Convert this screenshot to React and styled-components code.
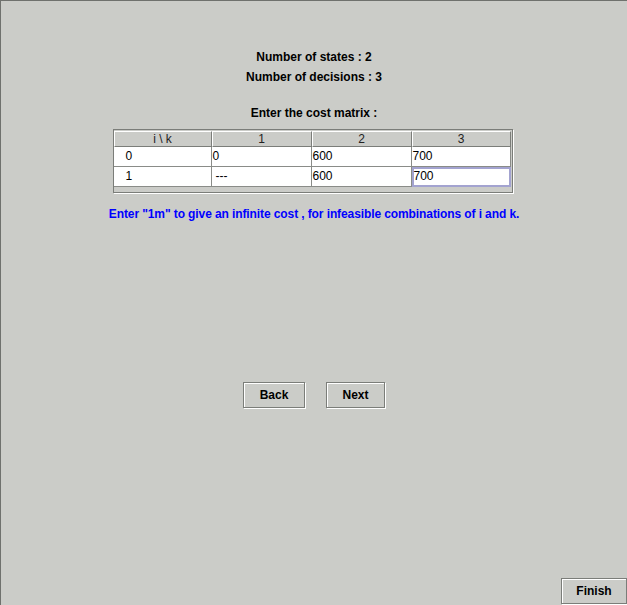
import React from "react";
import styled, { createGlobalStyle } from "styled-components";

const Global = createGlobalStyle`
  html, body {
    margin: 0;
    padding: 0;
    background: #cbccc8;
  }
  body {
    font-family: "Liberation Sans", Arial, sans-serif;
  }
`;

const Frame = styled.div`
  width: 627px;
  height: 605px;
  box-sizing: border-box;
  border-left: 1px solid #6f716d;
  border-top: 1px solid #6f716d;
  background: #cbccc8;
  display: flex;
  flex-direction: column;
  align-items: center;
  padding-top: 49px;
  position: relative;
`;

const Label = styled.div`
  font-size: 12px;
  font-weight: bold;
  color: ${(p) => (p.$blue ? "#0000ff" : "#000")};
  line-height: 14px;
  margin-top: ${(p) => p.$gap || 0}px;
  text-align: center;
  letter-spacing: ${(p) => (p.$blue ? "-0.1px" : "0")};
`;

const TableBox = styled.div`
  margin-top: 9px;
  width: 400px;
  box-sizing: border-box;
  border: 1px solid #7b7d79;
  box-shadow: 1px 1px 0 #ffffff;
  padding: 1px 1px 5px 0;
  margin-left: -3px;
`;

const Grid = styled.div`
  display: grid;
  grid-template-columns: 98px 100px 100px 99px;
`;

const Head = styled.div`
  height: 16px;
  box-sizing: border-box;
  background: #cbccc8;
  border-left: 1px solid #ffffff;
  border-top: 1px solid #ffffff;
  border-right: 1px solid #7b7d79;
  border-bottom: 1px solid #7b7d79;
  font-size: 12px;
  line-height: 14px;
  text-align: center;
  color: #222;
`;

const Cell = styled.div`
  height: 20px;
  box-sizing: border-box;
  background: #ffffff;
  border-right: 1px solid #8a8c88;
  border-bottom: 1px solid #8a8c88;
  font-size: 12px;
  line-height: 19px;
  padding-left: ${(p) => p.$pad ?? 1}px;
  color: #000;
  ${(p) =>
    p.$focus &&
    `
    border: 1px solid #a3a3d0;
    box-shadow: inset 0 0 0 1px #a3a3d0;
    line-height: 17px;
    padding-left: 1px;
  `}
`;

const Buttons = styled.div`
  display: flex;
  gap: 21px;
  margin-top: 161px;
`;

const Button = styled.button`
  font-family: "Liberation Sans", Arial, sans-serif;
  font-size: 12px;
  font-weight: bold;
  color: #000;
  background: #cbccc8;
  height: 26px;
  width: ${(p) => p.$w}px;
  box-sizing: border-box;
  border: 1px solid #7b7d79;
  box-shadow: inset 1px 1px 0 #ffffff, 1px 1px 0 #ffffff;
  padding: 0;
  cursor: default;
`;

const FinishButton = styled(Button)`
  position: absolute;
  right: 0;
  bottom: 1px;
`;

const rows = [
  ["0", "0", "600", "700"],
  ["1", "---", "600", "700"],
];

export default function App() {
  return (
    <>
      <Global />
      <Frame>
        <Label>Number of states : 2</Label>
        <Label $gap={6}>Number of decisions : 3</Label>
        <Label $gap={22}>Enter the cost matrix :</Label>
        <TableBox>
          <Grid>
            {["i \\ k", "1", "2", "3"].map((h) => (
              <Head key={h}>{h}</Head>
            ))}
            {rows.map((r, ri) =>
              r.map((v, ci) => (
                <Cell
                  key={ri + "-" + ci}
                  $pad={ci === 0 ? 12 : ci === 1 && ri === 1 ? 4 : 1}
                  $focus={ri === 1 && ci === 3}
                >
                  {v}
                </Cell>
              ))
            )}
          </Grid>
        </TableBox>
        <Label $blue $gap={14}>
          Enter "1m" to give an infinite cost , for infeasible combinations of i and k.
        </Label>
        <Buttons>
          <Button $w={62}>Back</Button>
          <Button $w={59}>Next</Button>
        </Buttons>
        <FinishButton $w={66}>Finish</FinishButton>
      </Frame>
    </>
  );
}
